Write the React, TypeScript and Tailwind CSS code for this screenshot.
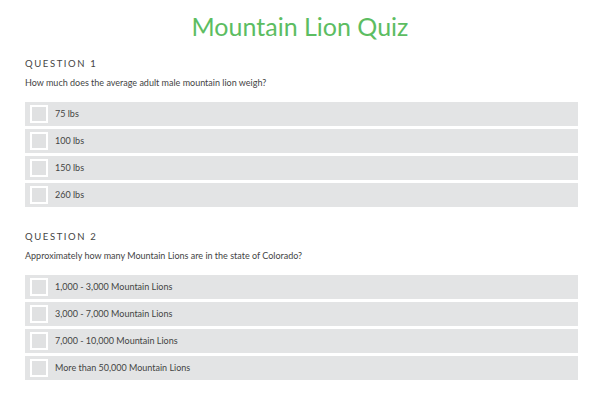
const questions = [
  {
    label: "Question 1",
    text: "How much does the average adult male mountain lion weigh?",
    options: ["75 lbs", "100 lbs", "150 lbs", "260 lbs"],
  },
  {
    label: "Question 2",
    text: "Approximately how many Mountain Lions are in the state of Colorado?",
    options: [
      "1,000 - 3,000 Mountain Lions",
      "3,000 - 7,000 Mountain Lions",
      "7,000 - 10,000 Mountain Lions",
      "More than 50,000 Mountain Lions",
    ],
  },
];

export default function App() {
  return (
    <div className="w-[600px] h-[400px] bg-white px-[25px] font-['Lato','Open_Sans',sans-serif] text-[#333]">
      <h1 className="text-center text-[25px] leading-[34px] pt-[9px] text-[#5cbd62] font-normal">
        Mountain Lion Quiz
      </h1>
      {questions.map((q, i) => (
        <div key={q.label} className={i === 0 ? "mt-[14px]" : "mt-[23px]"}>
          <div className="uppercase text-[9.5px] tracking-[1.6px] leading-[14px] text-[#444]">
            {q.label}
          </div>
          <p className="text-[9px] leading-[14px] mt-[5px] text-[#444]">{q.text}</p>
          <div className="mt-[12px] flex flex-col gap-[3px] w-[553px]">
            {q.options.map((opt) => (
              <div key={opt} className="h-[24px] bg-[#e3e4e5] flex items-center pl-[5px]">
                <span className="w-[18px] h-[18px] border-2 border-white bg-[#e0e1e2]" />
                <span className="ml-[7px] text-[9px] text-[#444]">{opt}</span>
              </div>
            ))}
          </div>
        </div>
      ))}
    </div>
  );
}
